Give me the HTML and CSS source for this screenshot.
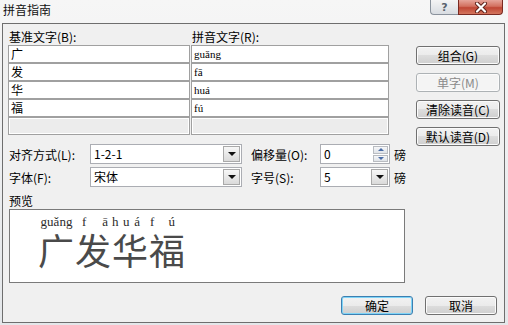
FILE: index.html
```html
<!DOCTYPE html>
<html lang="zh">
<head>
  <meta charset="UTF-8">
  <title>拼音指南</title>
  <link rel="stylesheet" href="styles.css">
</head>
<body>

<div class="window">
  <div class="titlebar">
    <span class="title">拼音指南</span>
    <div class="caption">
      <span class="cap-btn help">?</span>
      <span class="cap-btn close">
        <svg width="16" height="11" viewBox="0 0 16 11">
          <path d="M4 1.5 L12 9.5 M12 1.5 L4 9.5" stroke="#5b2018" stroke-width="4" stroke-linecap="round"/>
          <path d="M4 1.5 L12 9.5 M12 1.5 L4 9.5" stroke="#fff" stroke-width="2.2" stroke-linecap="round"/>
        </svg>
      </span>
    </div>
  </div>

  <div class="dialog">
    <div class="top">
      <div class="table-area">
        <div class="heads">
          <span>基准文字(B):</span>
          <span>拼音文字(R):</span>
        </div>
        <div class="grid">
          <div class="cell base">广</div><div class="cell pin">guǎng</div>
          <div class="cell base">发</div><div class="cell pin">fā</div>
          <div class="cell base">华</div><div class="cell pin">huá</div>
          <div class="cell base">福</div><div class="cell pin">fú</div>
          <div class="cell empty"></div><div class="cell empty"></div>
        </div>
      </div>
      <div class="side">
        <div class="btn">组合(G)</div>
        <div class="btn disabled">单字(M)</div>
        <div class="btn">清除读音(C)</div>
        <div class="btn">默认读音(D)</div>
      </div>
    </div>

    <div class="options">
      <span class="opt-label">对齐方式(L):</span>
      <div class="combo"><span class="val">1-2-1</span><span class="drop"><i class="tri"></i></span></div>
      <span class="opt-label second">偏移量(O):</span>
      <div class="combo"><span class="val">0</span>
        <span class="spin">
          <span class="spin-btn"><i class="up"></i></span>
          <span class="spin-btn"><i class="down"></i></span>
        </span>
      </div>
      <span class="unit">磅</span>

      <span class="opt-label">字体(F):</span>
      <div class="combo"><span class="val">宋体</span><span class="drop"><i class="tri"></i></span></div>
      <span class="opt-label second">字号(S):</span>
      <div class="combo"><span class="val">5</span><span class="drop"><i class="tri"></i></span></div>
      <span class="unit">磅</span>
    </div>

    <div class="preview-label">预览</div>
    <div class="preview">
      <div class="ruby">
        <div class="col">
          <div class="py center"><span>guǎng</span></div>
          <div class="hz">广</div>
        </div>
        <div class="col">
          <div class="py c2"><span>f</span><span>ā</span></div>
          <div class="hz">发</div>
        </div>
        <div class="col">
          <div class="py c3"><span>h</span><span>u</span><span>á</span></div>
          <div class="hz">华</div>
        </div>
        <div class="col">
          <div class="py c4"><span>f</span><span>ú</span></div>
          <div class="hz">福</div>
        </div>
      </div>
    </div>

    <div class="footer">
      <div class="btn wide default">确定</div>
      <div class="btn wide">取消</div>
    </div>
  </div>
</div>

</body>
</html>
```

FILE: styles.css
```css
body {
  margin: 0;
  font-family: "Noto Sans CJK SC", "Liberation Sans", sans-serif;
  font-size: 12px;
  color: #000;
}

.window {
  width: 508px;
  height: 325px;
  background: linear-gradient(#f6f6f6, #e4e7ea);
  display: flex;
  flex-direction: column;
}

/* title bar */
.titlebar {
  height: 23px;
  display: flex;
  justify-content: space-between;
  align-items: flex-start;
}

.title {
  padding: 2px 0 0 3px;
  line-height: 16px;
  color: #111;
}

.caption {
  display: flex;
  margin-right: 5px;
}

.cap-btn {
  height: 15px;
  box-sizing: border-box;
  display: flex;
  align-items: center;
  justify-content: center;
}

.help {
  width: 28px;
  border: 1px solid #8a929c;
  border-top: none;
  border-right: none;
  border-radius: 0 0 0 4px;
  background: linear-gradient(#f4f4f4, #d8dce1);
  color: #59626d;
  font: bold 11px "DejaVu Sans", sans-serif;
}

.close {
  width: 45px;
  border: 1px solid #7a2a22;
  border-top: none;
  border-radius: 0 0 4px 0;
  background: linear-gradient(#e6a59a 0%, #d2705f 45%, #bf4634 55%, #d3765e 100%);
}

/* dialog body */
.dialog {
  margin: 0 3px 0 2px;
  height: 300px;
  box-sizing: border-box;
  border: 1px solid #6e6e6e;
  background: #f0f0f0;
}

.top {
  display: flex;
  height: 105px;
  padding: 6px 0 0 5px;
}

.heads {
  display: grid;
  grid-template-columns: 182px 198px;
  column-gap: 1px;
  height: 15px;
  line-height: 14px;
}

.heads span {
  padding-left: 1px;
}

.grid {
  display: grid;
  grid-template-columns: 182px 198px;
  column-gap: 1px;
}

.cell {
  height: 18px;
  box-sizing: border-box;
  border: 1px solid #a0a0a0;
  background: #fff;
  line-height: 16px;
}

.base {
  padding-left: 2px;
}

.pin {
  padding-left: 2px;
  font-family: "Liberation Serif", serif;
  font-size: 11px;
}

.empty {
  background: #ececec;
  box-shadow: inset 0 0 0 1px #fff;
}

.side {
  margin-left: 27px;
  padding-top: 16px;
  display: flex;
  flex-direction: column;
  gap: 8px;
}

.btn {
  width: 84px;
  height: 19px;
  flex: none;
  box-sizing: border-box;
  border: 1px solid #707070;
  border-radius: 3px;
  background: linear-gradient(#f2f2f2 0%, #ebebeb 50%, #dddddd 50%, #cfcfcf 100%);
  box-shadow: inset 0 0 0 1px #fbfbfb;
  text-align: center;
  line-height: 17px;
}

.btn.disabled {
  border-color: #adb2b5;
  background: #f4f4f4;
  color: #8a8a8a;
}

/* options */
.options {
  display: grid;
  grid-template-columns: 81px 152px 78px 70px auto;
  grid-auto-rows: 20px;
  row-gap: 3px;
  margin: 9px 0 0 6px;
  align-items: center;
}

.opt-label.second {
  padding-left: 9px;
}

.unit {
  padding-left: 4px;
}

.combo {
  height: 20px;
  box-sizing: border-box;
  border: 1px solid #abadb3;
  background: #fff;
  display: flex;
}

.combo .val {
  flex: 1;
  padding-left: 3px;
  line-height: 18px;
}

.drop {
  width: 15px;
  margin: 1px;
  border: 1px solid #a9a9a9;
  background: linear-gradient(#f7f7f7, #dadada);
  display: flex;
  align-items: center;
  justify-content: center;
}

.tri {
  width: 0;
  height: 0;
  border-left: 4px solid transparent;
  border-right: 4px solid transparent;
  border-top: 4px solid #111;
}

.spin {
  width: 15px;
  margin: 1px;
  display: flex;
  flex-direction: column;
  gap: 1px;
}

.spin-btn {
  flex: 1;
  border: 1px solid #b9bcc1;
  background: linear-gradient(#f6f7f9, #dfe3e8);
  display: flex;
  align-items: center;
  justify-content: center;
}

.up, .down {
  width: 0;
  height: 0;
  border-left: 3px solid transparent;
  border-right: 3px solid transparent;
}

.up {
  border-bottom: 3px solid #4a6da7;
}

.down {
  border-top: 3px solid #4a6da7;
}

/* preview */
.preview-label {
  margin: 7px 0 0 6px;
  height: 15px;
  line-height: 14px;
}

.preview {
  margin-left: 6px;
  width: 396px;
  height: 74px;
  box-sizing: border-box;
  border: 1px solid #7a7a7a;
  background: #fff;
  padding: 5px 0 0 28px;
}

.ruby {
  display: flex;
}

.col {
  width: 37px;
  display: flex;
  flex-direction: column;
}

.py {
  height: 14px;
  display: flex;
  justify-content: space-between;
  font-family: "Liberation Serif", serif;
  font-size: 13px;
  line-height: 14px;
  color: #2b2b2b;
}

.py.center {
  justify-content: center;
  white-space: nowrap;
}

.py.c2 {
  padding: 0 4px 0 7px;
}

.py.c3 {
  padding: 0 9px 0 0;
}

.py.c4 {
  padding: 0 11px 0 1px;
}

.hz {
  margin-top: 2px;
  font-size: 36px;
  line-height: 37px;
  color: #4a4a4a;
}

/* footer */
.footer {
  display: flex;
  justify-content: flex-end;
  gap: 12px;
  margin: 13px 7px 0 0;
}

.btn.wide {
  width: 72px;
}

.btn.default {
  border-color: #3c7fb1;
  box-shadow: inset 0 0 0 1px #7fd4f7;
}
```
